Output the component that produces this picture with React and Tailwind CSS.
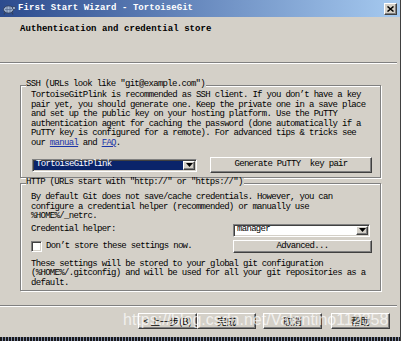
import React from "react";

// win2000-style bevels
const raised =
  "border border-t-white border-l-white border-b-[#404040] border-r-[#404040] shadow-[inset_-1px_-1px_0_#808080] bg-[#d4d0c8]";
const sunken =
  "border border-t-[#808080] border-l-[#808080] border-b-white border-r-white shadow-[inset_1px_1px_0_#404040,inset_-1px_-1px_0_#d4d0c8]";

const Line = ({ children }) => <div className="whitespace-pre h-[9.5px]">{children}</div>;

const Arrow = () => (
  <div className={`${raised} w-[12px] h-full flex items-center justify-center`}>
    <svg width="7" height="4" viewBox="0 0 7 4">
      <path d="M0 0h7L3.5 4z" fill="#000" />
    </svg>
  </div>
);

const Combo = ({ value, selected, width }) => (
  <div className={`${sunken} h-[13px] p-[1px] flex bg-white`} style={{ width }}>
    <div
      className={`flex-1 flex items-center pl-[2px] ${
        selected ? "bg-[#0a246a] text-white" : "bg-white text-black"
      }`}
    >
      {value}
    </div>
    <Arrow />
  </div>
);

const Button = ({ children, className = "" }) => (
  <div className={`${raised} flex items-center justify-center ${className}`}>{children}</div>
);

const GroupBox = ({ label, className = "", children }) => (
  <div
    className={`relative w-[361px] border border-[#808080] shadow-[1px_1px_0_#fff,inset_1px_1px_0_#fff] ${className}`}
  >
    <div className="absolute left-[5px] top-[-6px] bg-[#d4d0c8] pr-[1px] whitespace-pre leading-[9.5px]">
      {label}
    </div>
    {children}
  </div>
);

const TortoiseIcon = () => (
  <svg width="14" height="12" viewBox="0 0 14 12">
    <ellipse cx="6.5" cy="6.5" rx="5" ry="3.6" fill="#9fb2cf" stroke="#33415e" strokeWidth="1" />
    <path d="M3 6.5h7M5 4v5M8 4v5" stroke="#5b6e92" strokeWidth="0.8" />
    <circle cx="12" cy="5" r="1.6" fill="#9fb2cf" stroke="#33415e" strokeWidth="0.8" />
    <path d="M3 9.5l-1 2M10 9.5l1 2" stroke="#33415e" strokeWidth="1.2" />
  </svg>
);

const App = () => {
  const cjk = "font-['Noto_Sans_CJK_SC','Liberation_Mono',sans-serif]";
  return (
    <div className="relative w-[401px] h-[341px] bg-[#d4d0c8] overflow-hidden border-r border-[#404040] font-['Liberation_Mono','Noto_Sans_CJK_SC',monospace] text-black">
      {/* title bar */}
      <div className="h-[17px] flex items-center pl-[2px] pr-[3px] bg-[linear-gradient(90deg,#2c4b8e,#a6caf0)]">
        <TortoiseIcon />
        <div className="ml-[2px] text-white font-bold text-[9px] tracking-[0.07px] leading-[9px] whitespace-pre">
          First Start Wizard - TortoiseGit
        </div>
        <div className={`${raised} ml-auto w-[13px] h-[12px] flex items-center justify-center`}>
          <svg width="7" height="6" viewBox="0 0 7 6">
            <path d="M0.5 0.5l6 5M6.5 0.5l-6 5" stroke="#000" strokeWidth="1.5" />
          </svg>
        </div>
      </div>

      {/* header */}
      <div className="h-[45px] pl-[20px] pt-[8px] font-bold text-[9px] tracking-[0.07px] leading-[9.5px]">
        Authentication and credential store
      </div>
      <div className="h-[2px] w-[397px] border-t border-[#808080] border-b border-b-white" />

      {/* body */}
      <div className="pl-[20px] text-[9px] tracking-[-0.69px] leading-[9.5px]">
        <GroupBox label={'SSH (URLs look like "git@example.com")'} className="mt-[21px] h-[93px] pl-[10px] pt-[5px]">
          <Line>TortoiseGitPlink is recommended as SSH client. If you don’t have a key</Line>
          <Line>pair yet, you should generate one. Keep the private one in a save place</Line>
          <Line>and set up the public key on your hosting platform. Use the PuTTY</Line>
          <Line>authentication agent for caching the password (done automatically if a</Line>
          <Line>PuTTY key is configured for a remote). For advanced tips &amp; tricks see</Line>
          <Line>
            our <span className="text-[#1a35a8] underline">manual</span> and{" "}
            <span className="text-[#1a35a8] underline">FAQ</span>.
          </Line>
          <div className="mt-[9px] h-[16px] flex items-center">
            <div className="ml-[1px]">
              <Combo value="TortoiseGitPlink" selected width="165px" />
            </div>
            <Button className="ml-[13px] w-[162px] h-[16px] whitespace-pre">Generate PuTTY  key pair</Button>
          </div>
        </GroupBox>

        <GroupBox
          label={'HTTP (URLs start with "http://" or "https://")'}
          className="mt-[5px] h-[108px] pl-[10px] pt-[9px]"
        >
          <Line>By default Git does not save/cache credentials. However, you can</Line>
          <Line>configure a credential helper (recommended) or manually use</Line>
          <Line>%HOME%/_netrc.</Line>
          <div className="mt-[1.5px] h-[14px] flex items-center">
            <div className="w-[202px]">Credential helper:</div>
            <Combo value="manager" width="137px" />
          </div>
          <div className="mt-[3px] h-[13px] flex items-center">
            <div className="w-[202px] flex items-center">
              <div className={`${sunken} w-[11px] h-[11px] bg-white`} />
              <div className="ml-[4px] whitespace-pre">Don’t store these settings now.</div>
            </div>
            <Button className="w-[139px] h-[13px]">Advanced...</Button>
          </div>
          <div className="mt-[6.5px]">
            <Line>These settings will be stored to your global git configuration</Line>
            <Line>(%HOME%/.gitconfig) and will be used for all your git repositories as a</Line>
            <Line>default.</Line>
          </div>
        </GroupBox>
      </div>

      <div className="mt-[14px] h-[2px] w-[397px] border-t border-[#808080] border-b border-b-white" />

      {/* wizard buttons */}
      <div className={`mt-[6px] h-[16px] pl-[138px] flex text-[9.5px] leading-[12px] ${cjk}`}>
        <Button className="w-[59px] h-[16px] whitespace-pre">&lt; 上一步(B)</Button>
        <Button className="w-[59px] h-[16px] shadow-[inset_-1px_-1px_0_#808080,0_0_0_1px_#000]">完成</Button>
        <Button className="ml-[7px] w-[59px] h-[16px]">取消</Button>
        <Button className="ml-[9px] w-[59px] h-[16px]">帮助</Button>
      </div>

      <div className="mt-[8px] h-[4px] bg-[repeating-linear-gradient(90deg,#1a1a1a_0_2px,#7f8aa8_2px_3px)]" />

      {/* blog watermark */}
      <div className="absolute left-[123px] top-[312px] text-[16px] leading-[16px] font-['Liberation_Sans',sans-serif] text-white/70 whitespace-pre pointer-events-none">
        https://blog.csdn.net/Valentino112358
      </div>
    </div>
  );
};

export default App;
